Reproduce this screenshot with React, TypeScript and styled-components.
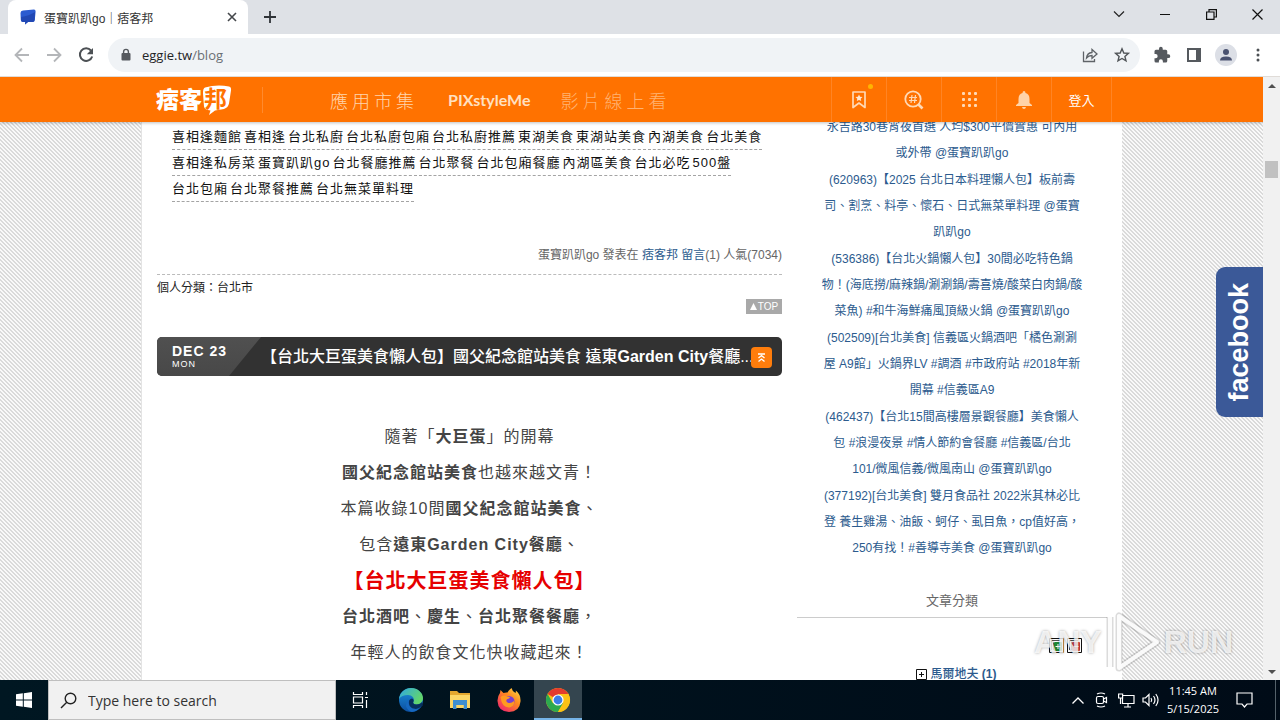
import React from "react";
import styled, { createGlobalStyle, css } from "styled-components";

const SANS = `"Liberation Sans", "Noto Sans CJK TC", sans-serif`;
const UI = `"Open Sans", "Noto Sans CJK TC", sans-serif`;

const GlobalStyle = createGlobalStyle`
  * { box-sizing: border-box; }
  body { margin: 0; font-family: ${SANS}; font-size: 12px; color: #333; overflow: hidden; }
  button { border: 0; padding: 0; background: none; font: inherit; color: inherit; cursor: pointer; }
  input { border: 0; padding: 0; background: none; outline: 0; }
  a { text-decoration: none; color: inherit; }
  ul, h1, h2, p { margin: 0; padding: 0; list-style: none; font-weight: inherit; font-size: inherit; }
  svg { display: block; flex: none; overflow: visible; }
`;

const Desktop = styled.div`
  display: flex;
  flex-direction: column;
  height: 100vh;
  background: #fff;
`;

/* ---------- browser chrome ---------- */

const TabStrip = styled.header`
  display: flex;
  align-items: stretch;
  height: 34px;
  padding-left: 8px;
  background: #dee1e6;
`;

const Tab = styled.div`
  display: flex;
  align-items: center;
  width: 240px;
  padding: 0 10px 0 12px;
  border-radius: 8px 8px 0 0;
  background: #fff;
  font-family: ${SANS};
  font-size: 12px;
  color: #333;
`;

const TabTitle = styled.span`
  flex: 1;
  margin-left: 8px;
  white-space: nowrap;
`;

const NewTab = styled.button`
  display: grid;
  place-items: center;
  width: 44px;
`;

const WindowButtons = styled.div`
  display: flex;
  align-items: center;
  margin-left: auto;
  height: 28px;
`;

const WindowButton = styled.button`
  display: grid;
  place-items: center;
  width: 46px;
  height: 28px;
`;

const Toolbar = styled.div`
  display: flex;
  align-items: center;
  height: 43px;
  padding: 0 6px 0 6px;
  border-bottom: 1px solid #e0dcd8;
  background: #fff;
`;

const ToolButton = styled.button`
  display: grid;
  place-items: center;
  width: 32px;
  height: 32px;
`;

const AddressBar = styled.label`
  display: flex;
  align-items: center;
  flex: 1;
  height: 34px;
  margin: 0 6px;
  padding: 0 2px 0 12px;
  border-radius: 17px;
  background: #f0f3f6;
`;

const AddressText = styled.span`
  flex: 1;
  margin-left: 10px;
  font-family: ${UI};
  font-size: 13px;
  color: #1f2326;
`;

const AddressPath = styled.span`
  color: #6a6f74;
`;

const Avatar = styled.button`
  display: grid;
  place-items: center;
  width: 22px;
  height: 22px;
  margin: 0 5px;
  border-radius: 50%;
  background: #dcdfe6;
`;

/* ---------- page ---------- */

const Viewport = styled.div`
  position: relative;
  display: flex;
  flex: 1;
  min-height: 0;
`;

const Page = styled.div`
  display: flex;
  flex-direction: column;
  flex: 1;
  min-width: 0;
  overflow: hidden;
  background: linear-gradient(45deg, #dadada 25%, #f9f9f9 25% 50%, #dadada 50% 75%, #f9f9f9 75%) 0 0 / 4px 4px;
`;

const SiteHeader = styled.header`
  z-index: 1;
  height: 45px;
  flex: none;
  background: #ff7200;
  box-shadow: 0 1px 3px rgba(0, 0, 0, 0.25);
`;

const SiteHeaderInner = styled.div`
  display: flex;
  align-items: center;
  width: 100%;
  max-width: 981px;
  height: 45px;
  margin: 0 auto;
  padding: 0 10px 0 15px;
`;

const Logo = styled.a`
  display: block;
`;

const SiteNav = styled.nav`
  display: flex;
  align-items: center;
  gap: 30px;
  height: 26px;
  margin-left: 30px;
  padding-left: 67px;
  border-left: 1px solid #ff8a2d;
`;

const NavLink = styled.a<{ $dim?: boolean }>`
  font-size: 18px;
  font-weight: 300;
  letter-spacing: 4px;
  color: ${(p) => (p.$dim ? "#ffb272" : "#ffd5ac")};
`;

const BrandLink = styled.a`
  font-family: Lato, ${SANS};
  font-size: 16px;
  font-weight: 700;
  color: #ffe0c0;
`;

const HeaderTools = styled.div`
  display: flex;
  margin-left: auto;
  border-right: 1px solid #ff8424;
`;

const HeaderTool = styled.button<{ $login?: boolean }>`
  position: relative;
  display: grid;
  place-items: center;
  width: ${(p) => (p.$login ? 60 : 55)}px;
  height: 45px;
  border-left: 1px solid #ff8424;
  font-size: 13px;
  color: #fff;
`;

const Dot = styled.i`
  position: absolute;
  top: 7px;
  right: 13px;
  width: 5px;
  height: 5px;
  border-radius: 50%;
  background: #ffb400;
`;

const Sheet = styled.main`
  display: grid;
  grid-template-columns: minmax(0, 1fr) 310px;
  gap: 15px;
  flex: 1;
  align-items: start;
  width: 100%;
  max-width: 981px;
  min-height: 0;
  margin: 0 auto;
  padding: 0 15px;
  border-left: 1px solid #e4e4e4;
  background: #fff;
`;

const Column = styled.section`
  min-width: 0;
`;

const Tags = styled.div`
  display: flex;
  flex-wrap: wrap;
  column-gap: 2px;
  padding: 2px 15px 0;
`;

const Tag = styled.a`
  border-bottom: 1px dashed #a4a4a4;
  font-size: 13px;
  line-height: 25px;
  letter-spacing: 1px;
  color: #111;
`;

const PostMeta = styled.p`
  margin-top: 43px;
  padding-bottom: 9px;
  border-bottom: 1px dashed #bbb;
  line-height: 20px;
  text-align: right;
  color: #666;
`;

const linkColor = css`
  color: #2c5b8e;
`;

const TextLink = styled.a`
  ${linkColor}
`;

const PostCategory = styled.p`
  margin-top: 3px;
  line-height: 20px;
  color: #222;
`;

const TopLink = styled.a`
  display: flex;
  align-items: center;
  justify-content: center;
  gap: 1px;
  width: 36px;
  height: 15px;
  margin: 1px 0 0 auto;
  background: #a9a9a9;
  font-size: 10px;
  color: #fff;
`;

const PostBar = styled.header`
  position: relative;
  display: flex;
  align-items: center;
  height: 39px;
  margin-top: 23px;
  border-radius: 5px;
  background: #323232;
  color: #fff;
`;

const PostDate = styled.div`
  align-self: stretch;
  width: 104px;
  padding: 6px 0 0 15px;
  border-radius: 5px 0 0 5px;
  background: linear-gradient(#505050, #484848);
  clip-path: polygon(0 0, 100% 0, 72px 100%, 0 100%);
`;

const DateDay = styled.strong`
  display: block;
  font-size: 14px;
  line-height: 16px;
  letter-spacing: 1px;
  white-space: nowrap;
`;

const DateWeek = styled.span`
  display: block;
  font-size: 9px;
  line-height: 11px;
  letter-spacing: 1px;
`;

const PostTitle = styled.h2`
  flex: 1;
  min-width: 0;
  font-size: 16px;
  font-weight: 500;
  line-height: 24px;
  white-space: nowrap;
`;

const LatinBold = styled.b`
  font-weight: 700;
`;

const Collapse = styled.button`
  position: absolute;
  top: 10px;
  right: 10px;
  display: grid;
  place-items: center;
  width: 21px;
  height: 21px;
  border-radius: 4px;
  background: #ff7d0c;
`;

const PostBody = styled.div`
  margin-top: 43px;
  font-size: 16px;
  line-height: 36px;
  letter-spacing: 1px;
  text-align: center;
  color: #444;
`;

const Headline = styled.p`
  height: 36px;
  font-size: 20px;
  font-weight: 700;
  color: #e60000;
`;

const Ranking = styled.ul`
  display: flex;
  flex-direction: column;
  gap: 1px;
  margin-top: -8px;
  line-height: 26px;
  text-align: center;
  white-space: pre;
`;

const SideTitle = styled.h2`
  margin-top: 30px;
  padding-bottom: 6px;
  border-bottom: 1px solid #ccc;
  font-size: 13px;
  line-height: 20px;
  text-align: center;
  color: #666;
`;

const TreeTools = styled.div`
  display: flex;
  justify-content: flex-end;
  gap: 3px;
  margin-top: 20px;
  padding-right: 25px;
`;

const TreeRow = styled.div`
  display: flex;
  justify-content: center;
  align-items: center;
  gap: 3px;
  margin-top: 11px;
  padding-left: 9px;
  font-weight: 500;
  line-height: 20px;
`;

const Scrollbar = styled.div`
  display: flex;
  flex-direction: column;
  align-items: center;
  width: 17px;
  background: #f1f1f1;
`;

const ScrollArrow = styled.button`
  display: grid;
  place-items: center;
  width: 17px;
  height: 17px;
`;

const ScrollTrack = styled.div`
  flex: 1;
  width: 13px;
  padding-top: 67px;
`;

const ScrollThumb = styled.div`
  height: 17px;
  background: #c1c1c1;
`;

const FacebookTab = styled.a`
  position: absolute;
  top: 190px;
  right: 17px;
  display: grid;
  place-items: center;
  width: 47px;
  height: 150px;
  border-radius: 9px 0 0 9px;
  background: #3b5998;
  font-size: 27px;
  font-weight: 700;
  color: #fff;
`;

const VerticalText = styled.span`
  writing-mode: vertical-rl;
  transform: rotate(180deg);
`;

const Watermark = styled.div`
  position: absolute;
  right: 47px;
  bottom: 6px;
  display: flex;
  align-items: center;
  gap: 2px;
  font-size: 32px;
  font-weight: 700;
  color: rgba(255, 255, 255, 0.8);
  text-shadow: 0 0 3px rgba(0, 0, 0, 0.35);
  pointer-events: none;
`;

/* ---------- taskbar ---------- */

const Taskbar = styled.footer`
  display: flex;
  height: 40px;
  flex: none;
  background: linear-gradient(90deg, #001722, #000b17);
  color: #fff;
`;

const PinnedApps = styled.div`
  display: flex;
  gap: 1px;
  margin-left: 3px;
`;

const TaskButton = styled.button<{ $active?: boolean }>`
  display: grid;
  place-items: center;
  width: 48px;
  height: 40px;
  ${(p) =>
    p.$active &&
    css`
      background: #34454f;
      box-shadow: inset 0 -2px #76b4e8;
    `}
`;

const SearchBox = styled.label`
  display: flex;
  align-items: center;
  gap: 11px;
  width: 288px;
  padding-left: 11px;
  border: 1px solid #bfbfbf;
  background: #f1f1f1;
`;

const SearchInput = styled.input`
  flex: 1;
  min-width: 0;
  font-family: ${UI};
  font-size: 14px;
  &::placeholder { color: #333; opacity: 1; }
`;

const Tray = styled.div`
  display: flex;
  align-items: center;
  margin-left: auto;
`;

const TrayButton = styled.button`
  display: grid;
  place-items: center;
  width: 24px;
  height: 40px;
`;

const Clock = styled.button`
  width: 62px;
  font-family: ${UI};
  font-size: 11px;
  line-height: 18px;
  text-align: center;
`;

const Notice = styled.button`
  display: grid;
  place-items: center;
  width: 54px;
  height: 40px;
  margin-left: -2px;
  margin-right: 4px;
  padding-right: 8px;
  border-right: 1px solid #54616a;
`;

const tags = [
  "喜相逢麵館", "喜相逢", "台北私廚", "台北私廚包廂", "台北私廚推薦", "東湖美食", "東湖站美食", "內湖美食", "台北美食",
  "喜相逢私房菜", "蛋寶趴趴go", "台北餐廳推薦", "台北聚餐", "台北包廂餐廳", "內湖區美食", "台北必吃", "500盤",
  "台北包廂", "台北聚餐推薦", "台北無菜單料理",
];

const ranking = [
  "永吉路30巷宵夜首選 人均$300平價實惠 可內用\n或外帶 @蛋寶趴趴go",
  "(620963)【2025 台北日本料理懶人包】板前壽\n司、割烹、料亭、懷石、日式無菜單料理 @蛋寶\n趴趴go",
  "(536386)【台北火鍋懶人包】30間必吃特色鍋\n物！(海底撈/麻辣鍋/涮涮鍋/壽喜燒/酸菜白肉鍋/酸\n菜魚) #和牛海鮮痛風頂級火鍋 @蛋寶趴趴go",
  "(502509)[台北美食] 信義區火鍋酒吧「橘色涮涮\n屋 A9館」火鍋界LV #調酒 #市政府站 #2018年新\n開幕 #信義區A9",
  "(462437)【台北15間高樓層景觀餐廳】美食懶人\n包 #浪漫夜景 #情人節約會餐廳 #信義區/台北\n101/微風信義/微風南山 @蛋寶趴趴go",
  "(377192)[台北美食] 雙月食品社 2022米其林必比\n登 養生雞湯、油飯、蚵仔、虱目魚，cp值好高，\n250有找！#善導寺美食 @蛋寶趴趴go",
];

const BrowserChrome = () => (
  <>
    <TabStrip>
      <Tab>
        <svg width="16" height="16" viewBox="0 0 16 16">
          <path d="M3 1.500 14 .5q1.600 0 1.600 2l-.8 8.500q-.2 2-2 2H8l-3 2.500.3-2.500H3q-2 0-2.200-2L.5 4q0-2.300 2.500-2.500z" fill="#2b5bd0" />
          <path d="M1 8q8-1 14-5l-.4 8q-.2 2-2 2H8l-3 2.500.3-2.500H3q-1.800 0-2-2z" fill="#2148b4" />
        </svg>
        <TabTitle>蛋寶趴趴go｜痞客邦</TabTitle>
        <button aria-label="關閉分頁">
          <svg width="12" height="12" viewBox="0 0 12 12" stroke="#44474b" strokeWidth="1.600"><path d="M2 2l8 8M10 2l-8 8" /></svg>
        </button>
      </Tab>
      <NewTab aria-label="新增分頁">
        <svg width="14" height="14" viewBox="0 0 14 14" stroke="#2f3338" strokeWidth="1.800"><path d="M7 1v12M1 7h12" /></svg>
      </NewTab>
      <WindowButtons>
        <WindowButton aria-label="分頁搜尋">
          <svg width="12" height="12" viewBox="0 0 12 12" fill="none" stroke="#222" strokeWidth="1.200"><path d="M1 3.500l5 5 5-5" /></svg>
        </WindowButton>
        <WindowButton aria-label="最小化">
          <svg width="10" height="10" viewBox="0 0 10 10" stroke="#111"><path d="M0 5.500h10" /></svg>
        </WindowButton>
        <WindowButton aria-label="還原">
          <svg width="11" height="11" viewBox="0 0 11 11" fill="none" stroke="#111" strokeWidth="1.200"><path d="M.6 3h7.400v7.400H.6zM3 3V.6h7.400V8H8" /></svg>
        </WindowButton>
        <WindowButton aria-label="關閉">
          <svg width="11" height="11" viewBox="0 0 11 11" stroke="#111" strokeWidth="1.200"><path d="M.5.5l10 10M10.500.5l-10 10" /></svg>
        </WindowButton>
      </WindowButtons>
    </TabStrip>
    <Toolbar>
      <ToolButton aria-label="上一頁">
        <svg width="16" height="16" viewBox="0 0 16 16" fill="none" stroke="#b4b6b9" strokeWidth="1.800"><path d="M15 8H2M8 1.500 1.500 8 8 14.500" /></svg>
      </ToolButton>
      <ToolButton aria-label="下一頁">
        <svg width="16" height="16" viewBox="0 0 16 16" fill="none" stroke="#b4b6b9" strokeWidth="1.800"><path d="M1 8h13M8 1.500 14.500 8 8 14.500" /></svg>
      </ToolButton>
      <ToolButton aria-label="重新載入">
        <svg width="16" height="16" viewBox="0 0 16 16"><path d="M13 3.500A6.300 6.300 0 1 0 14.200 9.500" fill="none" stroke="#4c5054" strokeWidth="2" /><path d="M15 1v6.200H8.800z" fill="#4c5054" /></svg>
      </ToolButton>
      <AddressBar>
        <svg width="12" height="14" viewBox="0 0 12 14"><rect x="1.500" y="5" width="9" height="7.500" rx="1" fill="#55595e" /><path d="M3.600 5.500V3.800a2.400 2.400 0 0 1 4.800 0v1.700" fill="none" stroke="#55595e" strokeWidth="1.400" /></svg>
        <AddressText>eggie.tw<AddressPath>/blog</AddressPath></AddressText>
        <ToolButton aria-label="分享">
          <svg width="16" height="16" viewBox="0 0 16 16" fill="none" stroke="#5f6368" strokeWidth="1.300"><path d="M1.500 4.500v10h11V12M4.500 11q.5-5 5.500-5.500V2.500l5 4.500-5 4.300V8.500Q6.500 8.500 4.500 11z" /></svg>
        </ToolButton>
        <ToolButton aria-label="加入書籤">
          <svg width="16" height="16" viewBox="0 0 16 16" fill="none" stroke="#505458" strokeWidth="1.400"><path d="M8 1.800l1.800 4.200 4.600.4-3.500 3 1.100 4.500L8 11.500l-4 2.400 1.100-4.500-3.500-3 4.600-.4z" /></svg>
        </ToolButton>
      </AddressBar>
      <ToolButton aria-label="擴充功能">
        <svg width="18" height="18" viewBox="0 0 24 24" fill="#55595e"><path d="M20.500 11H19V7a2 2 0 0 0-2-2h-4V3.500a2.500 2.500 0 0 0-5 0V5H4a2 2 0 0 0-2 2v3.800h1.500a2.700 2.700 0 0 1 0 5.400H2V20a2 2 0 0 0 2 2h3.800v-1.500a2.700 2.700 0 0 1 5.400 0V22H17a2 2 0 0 0 2-2v-4h1.500a2.500 2.500 0 0 0 0-5z" /></svg>
      </ToolButton>
      <ToolButton aria-label="側邊面板">
        <svg width="14" height="14" viewBox="0 0 14 14"><path d="M1 1h12v12H1z" fill="none" stroke="#55595e" strokeWidth="2" /><path d="M9 1h4v12H9z" fill="#55595e" /></svg>
      </ToolButton>
      <Avatar aria-label="個人資料">
        <svg width="14" height="14" viewBox="0 0 14 14" fill="#4a5270"><circle cx="7" cy="4" r="3" /><path d="M1 12.500Q1 8.500 7 8.500t6 4z" /></svg>
      </Avatar>
      <ToolButton aria-label="更多">
        <svg width="4" height="16" viewBox="0 0 4 16" fill="#4c5054"><circle cx="2" cy="3" r="1.500" /><circle cx="2" cy="8" r="1.500" /><circle cx="2" cy="13" r="1.500" /></svg>
      </ToolButton>
    </Toolbar>
  </>
);

const TopHeader = () => (
  <SiteHeader>
    <SiteHeaderInner>
      <Logo href="#" aria-label="痞客邦">
        <svg width="76" height="36" viewBox="0 -2 76 36" fontFamily="Noto Sans CJK TC, sans-serif" fontWeight="900">
          <text x="0" y="24" fontSize="23" fill="#fff">痞客</text>
          <path d="M49 3.500q12-3.500 24-1 2.500.5 2 4l-2 13q-.8 4-5 5.500l-9 1.500-6 4.500 1.500-4.500q-6-.5-6.500-4l-1-13q-.2-5 2-6z" fill="#fff" />
          <text x="48" y="23" fontSize="23" fontWeight="700" fill="#ff7200">邦</text>
        </svg>
      </Logo>
      <SiteNav>
        <NavLink href="#">應用市集</NavLink>
        <BrandLink href="#">PIXstyleMe</BrandLink>
        <NavLink href="#" $dim>影片線上看</NavLink>
      </SiteNav>
      <HeaderTools>
        <HeaderTool aria-label="收藏">
          <svg width="14" height="18" viewBox="0 0 14 18"><path d="M1 1h12v15.500l-6-4.500-6 4.500z" fill="none" stroke="#ffd9b5" strokeWidth="1.700" strokeLinejoin="round" /><path d="M7 3.500l1.100 2.200 2.400.3-1.800 1.700.5 2.400L7 9l-2.200 1.100.5-2.400L3.500 6l2.400-.3z" fill="#ffe9d4" /></svg>
          <Dot />
        </HeaderTool>
        <HeaderTool aria-label="搜尋標籤">
          <svg width="20" height="20" viewBox="0 0 20 20" fill="none" stroke="#ffd9b5"><circle cx="9" cy="9" r="7.700" strokeWidth="1.800" /><path d="M14.500 14.500l4 4" strokeWidth="2.600" /><path d="M8 5 7 13M11.500 5l-1 8M5 7.500h8M5 10.500h8" strokeWidth="1.200" /></svg>
        </HeaderTool>
        <HeaderTool aria-label="應用程式">
          <svg width="15" height="15" viewBox="0 0 15 15" fill="#ffd9b5">
            {[0, 6, 12].map((y) => [0, 6, 12].map((x) => <rect key={`${x}-${y}`} x={x} y={y} width="3" height="3" rx="1" />))}
          </svg>
        </HeaderTool>
        <HeaderTool aria-label="通知">
          <svg width="16" height="18" viewBox="0 0 16 18" fill="#ffd3a8"><path d="M8 0q1.500 0 1.500 2Q13.500 3 13.500 8v4L16 14v1H0v-1l2.500-2V8q0-5 4-6Q6.500 0 8 0zM6 16h4q-.4 2-2 2t-2-2z" /></svg>
        </HeaderTool>
        <HeaderTool $login>登入</HeaderTool>
      </HeaderTools>
    </SiteHeaderInner>
  </SiteHeader>
);

const Post = () => (
  <Column>
    <Tags>{tags.map((t) => <Tag key={t} href="#">{t}</Tag>)}</Tags>
    <PostMeta>
      蛋寶趴趴go 發表在 <TextLink href="#">痞客邦</TextLink> <TextLink href="#">留言</TextLink>(1) 人氣(7034)
    </PostMeta>
    <PostCategory>個人分類：<a href="#">台北市</a></PostCategory>
    <TopLink href="#">
      <svg width="7" height="7" viewBox="0 0 7 7" fill="#fff"><path d="M3.500 0 7 7H0z" /></svg>TOP
    </TopLink>
    <PostBar>
      <PostDate><DateDay>DEC 23</DateDay><DateWeek>MON</DateWeek></PostDate>
      <PostTitle>【台北大巨蛋美食懶人包】國父紀念館站美食 遠東<LatinBold>Garden City</LatinBold>餐廳...</PostTitle>
      <Collapse aria-label="收合">
        <svg width="9" height="9" viewBox="0 0 9 9" fill="none" stroke="#fff" strokeWidth="1.300"><path d="M1 1h7M1.500 5l3-2.500 3 2.500M1.500 8.500l3-2.500 3 2.500" /></svg>
      </Collapse>
    </PostBar>
    <PostBody>
      <p>隨著「<b>大巨蛋</b>」的開幕</p>
      <p><b>國父紀念館站美食</b>也越來越文青！</p>
      <p>本篇收錄10間<b>國父紀念館站美食</b>、</p>
      <p>包含<b>遠東Garden City餐廳</b>、</p>
      <Headline>【台北大巨蛋美食懶人包】</Headline>
      <p><b>台北酒吧</b>、<b>慶生</b>、<b>台北聚餐餐廳</b>，</p>
      <p>年輕人的飲食文化快收藏起來！</p>
    </PostBody>
  </Column>
);

const TreeIcon = ({ color, open }: { color: string; open?: boolean }) => (
  <svg width="15" height="15" viewBox="0 0 15 15">
    <path d="M.5.500h14v14H.5z" fill="#fff" stroke="#111" />
    <path d="M2.500 12V2.500H11M4.500 12V4.500" fill="none" stroke="#555" />
    <rect x="5" y="4" width="8" height="9" rx="1" fill={color} />
    <path d={open ? "M6.500 8.500h5M9 6v5" : "M6.500 8.500h5"} stroke="#fff" />
  </svg>
);

const Sidebar = () => (
  <Column as="aside">
    <Ranking>
      {ranking.map((r) => <li key={r}><TextLink href="#">{r}</TextLink></li>)}
    </Ranking>
    <SideTitle>文章分類</SideTitle>
    <TreeTools>
      <button aria-label="全部展開"><TreeIcon color="#1f8a35" open /></button>
      <button aria-label="全部收合"><TreeIcon color="#c8363f" /></button>
    </TreeTools>
    <TreeRow>
      <svg width="11" height="11" viewBox="0 0 11 11" stroke="#111" fill="#fff"><path d="M.5.500h10v10H.5zM3 5.500h5M5.500 3v5" /></svg>
      <TextLink href="#">馬爾地夫 <LatinBold>(1)</LatinBold></TextLink>
    </TreeRow>
  </Column>
);

const TaskIcons = () => (
  <>
    <TaskButton aria-label="工作檢視">
      <svg width="17" height="16" viewBox="0 0 17 16" fill="none" stroke="#fff" strokeWidth="1.200"><path d="M1.500 0v2.500h9V0M1.500 16v-2.500h9V16M1.500 5h9v6h-9zM14.500 0v3M14.500 8v8M13 5.500h3" /></svg>
    </TaskButton>
    <PinnedApps>
      <TaskButton aria-label="Edge">
        <svg width="24" height="24" viewBox="0 0 24 24">
          <defs>
            <linearGradient id="eg" x1="0" y1="0" x2="1" y2=".5"><stop offset="0" stopColor="#2fa8e4" /><stop offset="1" stopColor="#63d66a" /></linearGradient>
            <linearGradient id="eb" x1="0" y1="0" x2="0" y2="1"><stop offset="0" stopColor="#1c8fdc" /><stop offset="1" stopColor="#0c4fa0" /></linearGradient>
          </defs>
          <circle cx="12" cy="12" r="12" fill="url(#eb)" />
          <path d="M0 11C1 4 6 0 12 0c7 0 12 5 12 10 0 4-3 6.500-6.500 6.500-3 0-4-1.500-3-3C16 10 13 7 9 7 5 7 1.500 8.500 0 11z" fill="url(#eg)" />
          <path d="M14.500 13.500c-1 1.500 0 3 3 3 2 0 4-1 5.200-2.300l1.300 3L21 20q-2 2-4 1.500c-5 0-7.500-3.500-7.500-6.500 0-2.500 1.500-4 3.500-4.500 1.500.5 2 2 1.500 3z" fill="#062f5e" />
          <path d="M22.500 18q-3 5-9.500 6-5-1.500-6-6 0-4 3-6.500-2 9 7 9.500 3 0 5.500-3z" fill="#1668c0" />
        </svg>
      </TaskButton>
      <TaskButton aria-label="檔案總管">
        <svg width="22" height="20" viewBox="0 0 22 20"><path d="M1 1h7l2 2h11v5H1z" fill="#e3a72f" /><path d="M1 5h20v13H1z" fill="#fbd666" /><path d="M4 10h14v9h-3.500v-4h-7v4H4z" fill="#3f8fd0" /><path d="M7.500 15h7v3h-7z" fill="#fbd666" /></svg>
      </TaskButton>
      <TaskButton aria-label="Firefox">
        <svg width="24" height="24" viewBox="0 0 24 24">
          <defs><linearGradient id="ff" x1="1" y1="0" x2=".2" y2="1"><stop offset="0" stopColor="#ffe14a" /><stop offset=".45" stopColor="#ff8a1f" /><stop offset="1" stopColor="#f0246e" /></linearGradient></defs>
          <path d="M3 5l.5-3 3 3q2-.8 4-.5Q12 2 14.500 0q.5 3 4 5 .5-1 .3-2.500Q24 6.500 23.500 13.500 22.500 24 12 24 1 23.500.5 13 .3 8.500 3 5z" fill="url(#ff)" />
          <circle cx="12" cy="13.500" r="5.500" fill="#7a3fd0" />
          <path d="M3.500 9Q7 6.500 10 8.500l3 .5q-.5 1.800-3 2.200-1.500 1.800.5 3.300Q14 16 17 13q1 5-4.500 6.500Q5 20 3.500 9z" fill="#ff9a20" />
        </svg>
      </TaskButton>
      <TaskButton $active aria-label="Chrome">
        <svg width="24" height="24" viewBox="0 0 24 24">
          <circle cx="12" cy="12" r="12" fill="#fbc116" />
          <path d="M12 12 1.600 6A12 12 0 0 1 22.400 6H12z" fill="#e33b2e" />
          <path d="M1.600 6A12 12 0 0 0 12 24l5.200-9L12 12 6.800 15z" fill="#2da94f" />
          <path d="M22.400 6H12v6l5.200 3L12 24A12 12 0 0 0 22.400 6z" fill="#fbc116" />
          <circle cx="12" cy="12" r="5.600" fill="#fff" /><circle cx="12" cy="12" r="4.400" fill="#3b7de8" />
        </svg>
      </TaskButton>
    </PinnedApps>
  </>
);

export default function App() {
  return (
    <Desktop lang="zh-Hant">
      <GlobalStyle />
      <BrowserChrome />
      <Viewport>
        <Page>
          <TopHeader />
          <Sheet>
            <Post />
            <Sidebar />
          </Sheet>
        </Page>
        <Scrollbar>
          <ScrollArrow aria-label="向上捲動">
            <svg width="8" height="4" viewBox="0 0 8 4" fill="#505050"><path d="M4 0l4 4H0z" /></svg>
          </ScrollArrow>
          <ScrollTrack><ScrollThumb /></ScrollTrack>
          <ScrollArrow aria-label="向下捲動">
            <svg width="8" height="4" viewBox="0 0 8 4" fill="#505050"><path d="M4 4l4-4H0z" /></svg>
          </ScrollArrow>
        </Scrollbar>
        <FacebookTab href="#"><VerticalText>facebook</VerticalText></FacebookTab>
        <Watermark>
          <span>ANY</span>
          <svg width="58" height="64" viewBox="0 0 58 64" fill="none" strokeLinejoin="round">
            <g stroke="#000" strokeOpacity=".14" strokeWidth="7"><path d="M6 7v50M15 6v52l38-26z" /></g>
            <g stroke="#fff" strokeOpacity=".9" strokeWidth="4"><path d="M6 7v50M15 6v52l38-26z" /></g>
          </svg>
          <span>RUN</span>
        </Watermark>
      </Viewport>
      <Taskbar>
        <TaskButton aria-label="開始">
          <svg width="16" height="16" viewBox="0 0 16 16" fill="#fff"><path d="M0 2.300 6.800 1.300v6.200H0zM7.800 1.200 16 0v7.500H7.800zM0 8.500h6.800v6.200L0 13.700zM7.800 8.500H16V16l-8.200-1.200z" /></svg>
        </TaskButton>
        <SearchBox>
          <svg width="17" height="17" viewBox="0 0 17 17" fill="none" stroke="#222" strokeWidth="1.400"><circle cx="10.500" cy="6.500" r="5.300" /><path d="M6.800 10.200 1 16" /></svg>
          <SearchInput aria-label="Search" placeholder="Type here to search" />
        </SearchBox>
        <TaskIcons />
        <Tray>
          <TrayButton aria-label="顯示隱藏的圖示">
            <svg width="12" height="7" viewBox="0 0 12 7" fill="none" stroke="#fff" strokeWidth="1.300"><path d="M.5 6.500 6 1l5.500 5.500" /></svg>
          </TrayButton>
          <TrayButton aria-label="相機">
            <svg width="14" height="16" viewBox="0 0 14 16" fill="none" stroke="#fff" strokeWidth="1.200"><rect x="1.500" y="4.500" width="7" height="7" rx="1.500" /><path d="M8.500 7l3-1.500v5L8.500 9M2 2q4-2 8 0M2 14q4 2 8 0" /></svg>
          </TrayButton>
          <TrayButton aria-label="網路">
            <svg width="17" height="15" viewBox="0 0 17 15" fill="none" stroke="#fff" strokeWidth="1.200"><path d="M5 2.500h11v8H4.500V5M.6 1h4v4h-4zM2.500 5v6M10 10.500V14M6 14h7" /></svg>
          </TrayButton>
          <TrayButton aria-label="音量">
            <svg width="17" height="14" viewBox="0 0 17 14" fill="none" stroke="#fff" strokeWidth="1.200"><path d="M1 5h2.500L7 1.500v11L3.500 9H1zM9 5q1.500 2 0 4M11.500 3q3 4 0 8M13.800 1q4.500 6 0 12" /></svg>
          </TrayButton>
          <Clock>11:45 AM<br />5/15/2025</Clock>
          <Notice aria-label="通知中心">
            <svg width="17" height="16" viewBox="0 0 17 16" fill="none" stroke="#fff" strokeWidth="1.200"><path d="M1 1h15v11h-5l-2.500 3L6 12H1z" /></svg>
          </Notice>
        </Tray>
      </Taskbar>
    </Desktop>
  );
}
